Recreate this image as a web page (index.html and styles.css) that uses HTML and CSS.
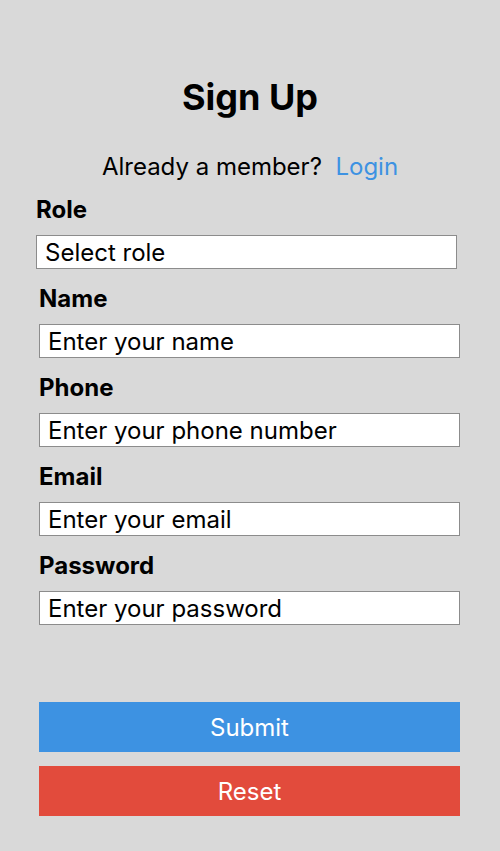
FILE: index.html
```html
<!DOCTYPE html>
<html>
<head>
<meta charset="utf-8">
<link rel="stylesheet" href="styles.css">
</head>
<body>
<main class="page">
  <h1 class="title">Sign Up</h1>
  <p class="member">Already a member?&nbsp; <a class="login" href="#">Login</a></p>
  <form class="form">
    <div class="field field-role">
      <label class="label">Role</label>
      <div class="input">Select role</div>
    </div>
    <div class="field">
      <label class="label">Name</label>
      <div class="input">Enter your name</div>
    </div>
    <div class="field">
      <label class="label">Phone</label>
      <div class="input">Enter your phone number</div>
    </div>
    <div class="field">
      <label class="label">Email</label>
      <div class="input">Enter your email</div>
    </div>
    <div class="field">
      <label class="label">Password</label>
      <div class="input">Enter your password</div>
    </div>
    <div class="buttons">
      <button type="button" class="btn btn-submit">Submit</button>
      <button type="button" class="btn btn-reset">Reset</button>
    </div>
  </form>
</main>
</body>
</html>
```

FILE: styles.css
```css
* { box-sizing: border-box; }
html, body {
  margin: 0;
  padding: 0;
  background: #d9d9d9;
}
body {
  font-family: Inter, "Noto Sans", sans-serif;
  color: #000;
  width: 500px;
  height: 851px;
}
.page {
  display: flex;
  flex-direction: column;
  align-items: center;
  padding-top: 75px;
}
.title {
  margin: 0;
  font-size: 36px;
  line-height: 44px;
  font-weight: 700;
  text-align: center;
}
.member {
  margin: 33px 0 0;
  font-size: 24px;
  line-height: 30px;
  text-align: center;
}
.login {
  color: #3d92e2;
  text-decoration: none;
}
.form {
  align-self: flex-start;
  margin-left: 39px;
  width: 421px;
  display: flex;
  flex-direction: column;
  margin-top: 14px;
}
.field {
  display: flex;
  flex-direction: column;
  gap: 11px;
  margin-bottom: 16px;
}
.field-role {
  margin-left: -3px;
  margin-right: 3px;
}
.label {
  font-size: 24px;
  line-height: 28px;
  font-weight: 700;
}
.input {
  height: 34px;
  border: 1px solid #8c8c8c;
  background: #fff;
  padding: 1px 8px 0;
  font-size: 24px;
  line-height: 31px;
  white-space: nowrap;
}
.buttons {
  display: flex;
  flex-direction: column;
  gap: 14px;
  margin-top: 61px;
}
.btn {
  height: 50px;
  border: none;
  padding: 0;
  font-family: Inter, "Noto Sans", sans-serif;
  font-size: 24px;
  color: #fff;
  cursor: pointer;
}
.btn-submit { background: #3d92e2; }
.btn-reset { background: #e24b3c; }
```
